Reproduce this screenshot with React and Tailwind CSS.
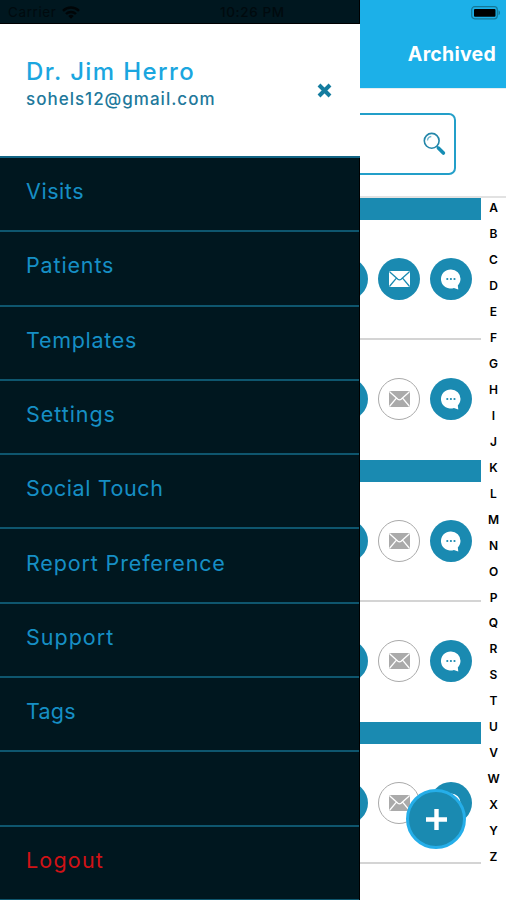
import React from 'react';

const MENU = [
  { label: 'Visits', tone: 'tracking-[0.55px]' },
  { label: 'Patients', tone: 'tracking-[0.85px]' },
  { label: 'Templates', tone: 'tracking-[0.7px]' },
  { label: 'Settings', tone: 'tracking-[0.95px]' },
  { label: 'Social Touch', tone: 'tracking-[0.6px]' },
  { label: 'Report Preference', tone: 'tracking-[0.85px]' },
  { label: 'Support', tone: 'tracking-[1px]' },
  { label: 'Tags', tone: 'tracking-[0.2px]' },
  { label: '', tone: '' },
];

const LETTERS = 'ABCDEFGHIJKLMNOPQRSTUVWXYZ'.split('');

function WifiIcon() {
  return (
    <svg className="ml-[7px] h-[13px] w-[18px]" viewBox="0 0 18 13">
      <path d="M1 4.8a11.5 11.5 0 0 1 16 0M4 8a7.2 7.2 0 0 1 10 0" fill="none" stroke="#000507" strokeWidth="2.4" />
      <path d="M6.3 10a4 4 0 0 1 5.4 0L9 12.8z" fill="#000507" />
    </svg>
  );
}

function BatteryIcon() {
  return (
    <svg className="h-[14px] w-[30px]" viewBox="0 0 30 14">
      <rect x="0.7" y="0.7" width="25.6" height="12.1" rx="3" fill="none" stroke="#147796" strokeWidth="1.2" />
      <rect x="3" y="3" width="21.5" height="7.8" rx="1" fill="#000" />
      <path d="M27.5 4.2c2 .8 2 4.2 0 5z" fill="#147796" />
    </svg>
  );
}

function SearchIcon() {
  return (
    <svg className="h-[24px] w-[23px]" viewBox="0 0 23 24">
      <circle cx="8.7" cy="8.8" r="7.4" fill="none" stroke="#2386a9" strokeWidth="1.6" />
      <path d="M4.5 8.5a4.3 4.3 0 0 1 3.8-4" fill="none" stroke="#70b7cf" strokeWidth="1.3" />
      <path d="M13.7 14.2l1.8 1.8" stroke="#2386a9" strokeWidth="1.4" />
      <path d="M15.4 16.1l5 5" stroke="#168db4" strokeWidth="3.6" strokeLinecap="round" />
    </svg>
  );
}

function Mail({ active }) {
  const line = active ? '#1a8ab1' : '#ffffff';
  return (
    <div
      className={
        'flex size-[42px] shrink-0 items-center justify-center rounded-full ' +
        (active ? 'bg-[#1a8ab1]' : 'border border-[#aaaaaa] bg-white')
      }
    >
      <svg className="h-[16px] w-[21px] shrink-0" viewBox="0 0 21 16">
        <rect width="21" height="16" rx="2" fill={active ? '#ffffff' : '#aaaaaa'} />
        <path d="M0.8 1l8.1 7.3q1.6 1.3 3.2 0L20.2 1M0.8 15l6.6-7.8M20.2 15l-6.6-7.8" fill="none" stroke={line} strokeWidth="1.3" />
      </svg>
    </div>
  );
}

function Chat() {
  return (
    <div className="flex size-[42px] shrink-0 items-center justify-center rounded-full bg-[#1a8ab1]">
      <svg className="h-[21px] w-[20px]" viewBox="0 0 20 21">
        <path d="M10 .4a9.5 9.5 0 0 1 9.5 9.7c0 3-1.4 5.1-2.7 6.5l.5 4-4.4-1.6A9.6 9.6 0 1 1 10 .4z" fill="#fff" />
        <g fill="#1a8ab1">
          <circle cx="6.3" cy="10" r="1.1" />
          <circle cx="9.9" cy="10" r="1.1" />
          <circle cx="13.5" cy="10" r="1.1" />
        </g>
      </svg>
    </div>
  );
}

function PatientRow({ active, last }) {
  return (
    <div
      className={
        'flex h-[120px] items-center justify-end gap-[10px] pr-[9px] ' +
        (last ? 'pb-[2px]' : 'border-b-2 border-[#d4d4d4]')
      }
    >
      <div className="size-[42px] shrink-0 rounded-full bg-[#1a8ab1]" />
      <Mail active={active} />
      <Chat />
    </div>
  );
}

function SectionBar() {
  return <div className="h-[22px] bg-[#1a8ab1]" />;
}

function Drawer() {
  return (
    <aside className="flex h-full w-[360px] shrink-0 flex-col border-r border-black bg-[#00171f]">
      <div className="flex h-[24px] shrink-0 items-center border-b border-black pl-[8px] pt-[2px] text-[13.5px] text-[#000a0e]">
        <span className="w-[47px] tracking-[0.6px]">Carrier</span>
        <WifiIcon />
        <span className="ml-[140px] whitespace-nowrap font-medium tracking-[0.6px]">10:26 PM</span>
      </div>
      <header className="-mr-px flex h-[134px] shrink-0 items-start justify-between border-b-2 border-[#126585] bg-white pl-[26px]">
        <div className="pt-[34px]">
          <h1 className="text-[24px] font-medium leading-[28px] tracking-[1.4px] text-[#1ba6df]">Dr. Jim Herro</h1>
          <p className="text-[17px] font-medium leading-[26px] tracking-[1px] text-[#21789b]">sohels12@gmail.com</p>
        </div>
        <svg className="mr-[27px] mt-[58px] size-[17px]" viewBox="0 0 17 17">
          <path d="M3 3l11 11M14 3L3 14" stroke="#147c9f" strokeWidth="4" />
        </svg>
      </header>
      <nav className="flex flex-1 flex-col text-[21.5px] text-[#168fc5]">
        {MENU.map((item, i) => (
          <div key={i} className="flex flex-1 items-center border-b-2 border-[#0e566e] pb-[6px] pl-[26px]">
            <span className={item.tone}>{item.label}</span>
          </div>
        ))}
        <div className="flex flex-1 items-center border-b border-[#0e566e] pb-[6px] pl-[26px] text-[#d01216]">
          <span className="tracking-[1.2px]">Logout</span>
        </div>
      </nav>
    </aside>
  );
}

export default function App() {
  return (
    <div className="relative flex h-[900px] w-[506px] overflow-hidden bg-white font-['Inter','Liberation_Sans',sans-serif]">
      <Drawer />
      <main className="flex w-[146px] shrink-0 flex-col overflow-hidden">
        <div className="flex h-[88px] shrink-0 flex-col items-end bg-[#1cb0e8]">
          <div className="pr-[5px] pt-[6px]">
            <BatteryIcon />
          </div>
          <span className="mt-[20px] pr-[10px] text-[19.5px] font-bold leading-[28px] tracking-[0.25px] text-white">Archived</span>
        </div>
        <div className="flex h-[108px] shrink-0 border-t border-[#e5eef1] pt-[24px]">
          <div className="flex h-[62px] w-[96px] items-center justify-end rounded-r-[7px] border-2 border-l-0 border-[#239fc9] pr-[8px]">
            <SearchIcon />
          </div>
        </div>
        <div className="flex flex-1 border-t-2 border-[#e2e2e2]">
          <div className="w-[121px] shrink-0 overflow-hidden">
            <SectionBar />
            <PatientRow active />
            <PatientRow last />
            <SectionBar />
            <PatientRow />
            <PatientRow last />
            <SectionBar />
            <PatientRow />
          </div>
          <div className="-mt-[3px] flex h-[675px] w-[25px] flex-col text-center text-[12px] font-semibold text-black">
            {LETTERS.map((l) => (
              <span key={l} className="flex flex-1 items-center justify-center">{l}</span>
            ))}
          </div>
        </div>
      </main>
      <button className="absolute left-[406px] top-[789px] flex size-[60px] items-center justify-center rounded-full border-[3px] border-[#25aee9] bg-[#1a8ab1]">
        <svg className="size-[21px]" viewBox="0 0 21 21">
          <path d="M10.5 0v21M0 10.5h21" stroke="#fff" strokeWidth="4.4" />
        </svg>
      </button>
    </div>
  );
}
